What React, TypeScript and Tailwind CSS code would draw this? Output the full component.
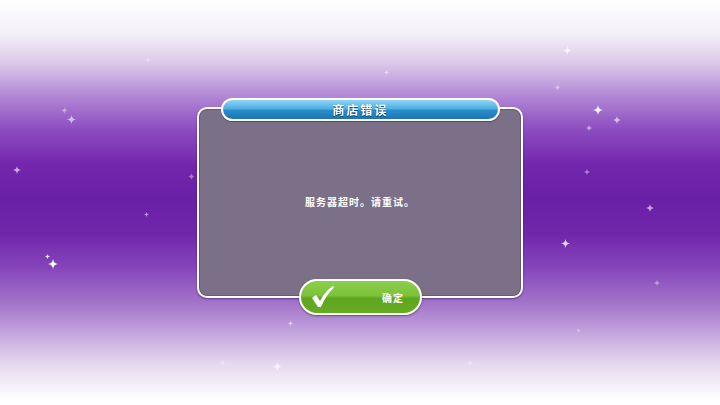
import React from 'react';

// Four-point twinkles scattered over the backdrop: [x, y, size, opacity]
const SPARKLES: [number, number, number, number][] = [
  [567, 50, 9, 0.7],
  [598, 110, 10, 0.9],
  [617, 120, 8, 0.6],
  [589, 128, 6, 0.5],
  [557, 87, 7, 0.4],
  [71, 119, 9, 0.6],
  [64, 110, 7, 0.4],
  [17, 170, 8, 0.6],
  [191, 176, 7, 0.4],
  [146, 214, 5, 0.5],
  [53, 264, 10, 1],
  [47, 256, 5, 0.9],
  [650, 208, 8, 0.6],
  [565, 243, 9, 0.8],
  [587, 172, 6, 0.4],
  [657, 283, 6, 0.4],
  [290, 323, 5, 0.6],
  [277, 366, 9, 0.7],
  [222, 362, 7, 0.3],
  [470, 363, 6, 0.3],
  [386, 72, 5, 0.5],
  [148, 60, 6, 0.3],
  [328, 180, 7, 0.25],
  [387, 133, 8, 0.25],
  [503, 160, 7, 0.2],
  [245, 240, 6, 0.15],
  [578, 330, 5, 0.3],
];

function Sparkle({ x, y, size, opacity }: { x: number; y: number; size: number; opacity: number }) {
  return (
    <svg
      className="absolute pointer-events-none"
      style={{ left: x - size / 2, top: y - size / 2, opacity }}
      width={size}
      height={size}
      viewBox="0 0 20 20"
    >
      <path d="M10 0 Q11 9 20 10 Q11 11 10 20 Q9 11 0 10 Q9 9 10 0Z" fill="#ffffff" />
    </svg>
  );
}

function CheckMark() {
  return (
    <svg width="24" height="22" viewBox="0 0 24 22">
      <path d="M1 12 L5 9 L9 15 Q14 5 22 0 L23 1.5 Q15 9 10 21 L7 21 Z" fill="#ffffff" />
    </svg>
  );
}

export default function App() {
  return (
    <div className="relative w-[720px] h-[405px] overflow-hidden flex items-center justify-center font-['Noto_Sans_CJK_SC','Noto_Sans',sans-serif] bg-[linear-gradient(to_bottom,#ffffff_0px,#f3eef7_35px,#d9c5e8_65px,#b389d6_95px,#8c4cc0_130px,#7226ac_165px,#6a1fa7_200px,#7127ab_235px,#8748bb_270px,#a477cb_305px,#c6a8de_335px,#e6d9f0_365px,#ffffff_400px)]">
      {SPARKLES.map(([x, y, s, o], i) => (
        <Sparkle key={i} x={x} y={y} size={s} opacity={o} />
      ))}

      {/* Dialog panel */}
      <div className="relative w-[326px] h-[191px] rounded-[10px] border-2 border-white bg-[#7b7088] shadow-[0_1px_2px_rgba(40,0,70,0.5),inset_0_0_0_1px_rgba(60,50,70,0.35)]">
        {/* Title ribbon */}
        <div className="absolute left-[22px] top-[-11px] w-[279px] h-[23px] rounded-full border-2 border-white overflow-hidden bg-[linear-gradient(to_bottom,#8fd4f4_0%,#4eb0e3_45%,#2a8cca_55%,#1b75b4_100%)] shadow-[0_1px_1px_rgba(20,40,80,0.5)] flex items-center justify-center">
          <span className="text-white text-[12px] font-bold tracking-[2px] leading-none drop-shadow-[0_1px_0_rgba(0,40,90,0.7)]">
            商店错误
          </span>
        </div>

        {/* Message */}
        <div className="h-full flex items-center justify-center pb-[3px]">
          <span className="text-white text-[10px] font-bold tracking-[1px]">服务器超时。请重试。</span>
        </div>

        {/* Confirm button */}
        <button className="absolute left-[100px] bottom-[-19px] w-[123px] h-[36px] rounded-full border-2 border-white overflow-hidden bg-[linear-gradient(to_bottom,#8bcf4c_0%,#7cc23a_45%,#5fa51f_55%,#66ac22_100%)] shadow-[0_1px_2px_rgba(30,60,0,0.6)] flex items-center pl-[10px] pr-[16px]">
          <CheckMark />
          <span className="ml-auto text-white text-[10px] font-bold tracking-[1px]">确定</span>
        </button>
      </div>
    </div>
  );
}
